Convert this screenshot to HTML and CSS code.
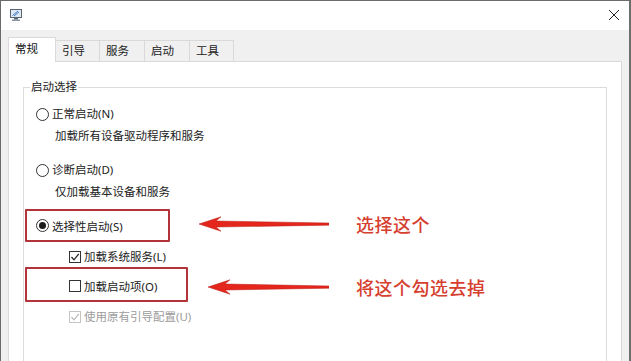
FILE: index.html
```html
<!DOCTYPE html>
<html lang="zh">
<head>
<meta charset="utf-8">
<link rel="stylesheet" href="styles.css">
</head>
<body>
<div class="window">
  <div class="titlebar">
    <svg class="app-icon" width="14" height="14" viewBox="0 0 14 14">
      <rect x="1.5" y="1.5" width="11" height="8" fill="#dfe8f3" stroke="#5a6470"/>
      <path d="M3.5 7.5 L9 3 M5 8 L10 4" stroke="#3d7cc9" stroke-width="1"/>
      <rect x="5" y="10" width="4" height="1.5" fill="#5a6470"/>
      <rect x="3" y="11.5" width="8" height="1.5" fill="#8a96a3"/>
    </svg>
    <svg class="close" width="12" height="12" viewBox="0 0 12 12">
      <path d="M1 1 L11 11 M11 1 L1 11" stroke="#222" stroke-width="1"/>
    </svg>
  </div>
  <div class="client">
    <div class="tabs">
      <div class="tab active">常规</div>
      <div class="tab">引导</div>
      <div class="tab">服务</div>
      <div class="tab">启动</div>
      <div class="tab">工具</div>
    </div>
    <div class="panel">
      <fieldset class="group">
        <legend>启动选择</legend>
        <div class="opt first"><span class="radio"></span>正常启动(N)</div>
        <div class="desc">加载所有设备驱动程序和服务</div>
        <div class="opt second"><span class="radio"></span>诊断启动(D)</div>
        <div class="desc">仅加载基本设备和服务</div>
        <div class="annot-row row-a">
          <div class="redbox box-a"><span class="radio on"></span>选择性启动(S)</div>
          <svg class="arrow arrow-a" width="130" height="16" viewBox="0 0 130 16">
            <polygon points="0,8 22,0.8 17,5 130,7 130,9.2 17,11 22,15.2" fill="#e5261c" stroke="#b81d16" stroke-width="0.5"/>
          </svg>
          <span class="note">选择这个</span>
        </div>
        <div class="opt check-row"><span class="checkbox checked"><svg width="10" height="10" viewBox="0 0 10 10"><path d="M1.5 5 L4 7.8 L8.8 1.8" fill="none" stroke="#222" stroke-width="1.2"/></svg></span>加载系统服务(L)</div>
        <div class="annot-row row-b">
          <div class="redbox box-b"><span class="checkbox"></span>加载启动项(O)</div>
          <svg class="arrow arrow-b" width="121" height="16" viewBox="0 0 121 16">
            <polygon points="0,8 22,0.8 17,5 121,7 121,9.2 17,11 22,15.2" fill="#e5261c" stroke="#b81d16" stroke-width="0.5"/>
          </svg>
          <span class="note">将这个勾选去掉</span>
        </div>
        <div class="opt check-row disabled"><span class="checkbox checked dis"><svg width="10" height="10" viewBox="0 0 10 10"><path d="M1.5 5 L4 7.8 L8.8 1.8" fill="none" stroke="#b8b8b8" stroke-width="1.2"/></svg></span>使用原有引导配置(U)</div>
      </fieldset>
    </div>
  </div>
</div>
</body>
</html>
```
FILE: styles.css
```css
* { box-sizing: border-box; }
html, body {
  margin: 0;
  padding: 0;
  background: #ffffff;
}
body {
  width: 631px;
  height: 361px;
  overflow: hidden;
  font-family: "Noto Sans", "Noto Sans CJK SC", sans-serif;
  font-size: 11.5px;
  color: #1b1b1b;
}
.window {
  width: 631px;
  height: 361px;
  overflow: hidden;
  border-top: 1px solid #6a6a6a;
  border-left: 1px solid #6a6a6a;
  border-right: 2px solid #6e6e6e;
  display: flex;
  flex-direction: column;
  background: #f0f0f0;
}
.titlebar {
  height: 29px;
  background: #ffffff;
  display: flex;
  align-items: center;
  justify-content: space-between;
  padding: 0 9px 0 8px;
  flex: none;
}
.app-icon { margin-top: -2px; }
.close { margin-top: -2px; }
.client {
  flex: 1;
  min-height: 0;
  padding: 7px 7px 0 7px;
  display: flex;
  flex-direction: column;
}
.tabs {
  display: flex;
  align-items: flex-end;
  height: 24px;
  flex: none;
  position: relative;
  z-index: 1;
}
.tab {
  height: 21px;
  line-height: 19px;
  padding-left: 6px;
  border: 1px solid #d9d9d9;
  border-left: none;
  border-bottom: none;
  background: #f0f0f0;
  width: 44px;
  color: #222;
}
.tab:nth-child(3), .tab:nth-child(4) { width: 45px; }
.tab.active {
  height: 25px;
  width: 48px;
  margin-bottom: -1px;
  padding-left: 6px;
  line-height: 22px;
  background: #ffffff;
  border-left: 1px solid #d9d9d9;
  border-right: 1px solid #d9d9d9;
  color: #111;
}
.panel {
  flex: 1;
  min-height: 0;
  overflow: hidden;
  width: 614px;
  background: #ffffff;
  border: 1px solid #d9d9d9;
  border-bottom: none;
  padding: 18px 14px 0 14px;
}
.group {
  margin: 0;
  border: 1px solid #dcdcdc;
  padding: 0 12px 40px 12px;
  min-width: 0;
}
.group legend {
  padding: 0 1px;
  margin-left: -6px;
  line-height: 14px;
  color: #222;
}
.opt {
  display: flex;
  align-items: center;
  height: 16px;
  line-height: 16px;
}
.opt.first { margin-top: 12px; }
.opt.second { margin-top: 18px; }
.desc {
  height: 16px;
  line-height: 16px;
  margin-top: 6px;
  padding-left: 19px;
  color: #222;
}
.radio {
  width: 13px;
  height: 13px;
  border: 1px solid #333;
  border-radius: 50%;
  margin-right: 3px;
  display: inline-flex;
  align-items: center;
  justify-content: center;
  flex: none;
  background: #fff;
}
.radio.on::after {
  content: "";
  width: 7px;
  height: 7px;
  border-radius: 50%;
  background: #1b1b1b;
}
.checkbox {
  width: 12px;
  height: 12px;
  border: 1px solid #333;
  background: #fff;
  margin-right: 3px;
  display: inline-flex;
  align-items: center;
  justify-content: center;
  flex: none;
}
.checkbox.dis { border-color: #c4c4c4; }
.check-row { padding-left: 33px; margin-top: 7px; }
.disabled { color: #9c9c9c; }
.annot-row {
  display: flex;
  align-items: center;
  margin-left: -11px;
}
.row-a { margin-top: 9px; }
.row-b { margin-top: 2px; }
.redbox {
  display: flex;
  align-items: center;
  border: 2px solid #b2343a;
  border-radius: 1px;
  flex: none;
}
.box-a {
  width: 145px;
  height: 33px;
  padding-left: 9px;
}
.box-b {
  width: 163px;
  height: 35px;
  padding-left: 42px;
  padding-top: 3px;
}
.arrow { flex: none; }
.arrow-a { margin-left: 29px; margin-bottom: 4px; }
.arrow-b { margin-left: 20px; margin-top: 4px; }
.note {
  margin-left: 27px;
  font-family: "Noto Sans CJK SC", sans-serif;
  font-size: 18px;
  font-weight: 500;
  letter-spacing: 0.5px;
  color: #d6402f;
  line-height: 24px;
}
.row-a .note { margin-bottom: 3px; }
.row-b .note { margin-top: 4px; }
```
